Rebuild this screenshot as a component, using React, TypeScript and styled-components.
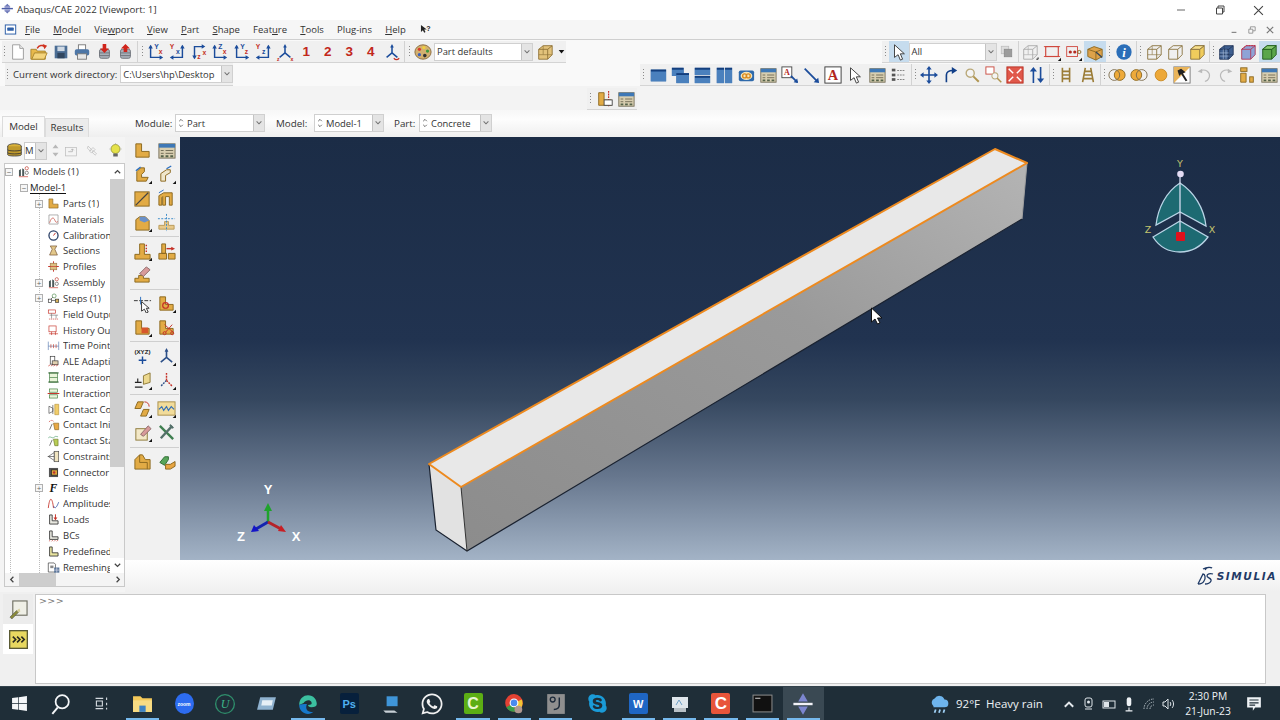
import type { ReactNode } from "react";
import styled, { createGlobalStyle } from "styled-components";
import { FaSkype, FaWhatsapp, FaWindows } from "react-icons/fa";

const GlobalStyle = createGlobalStyle`
  html, body { margin: 0; padding: 0; background: #f0f0f0; }
  body { font-family: "Open Sans", "Noto Sans", sans-serif; color: #222; }
  * { box-sizing: border-box; }
`;

const Page = styled.div`
  width: 1280px;
  height: 720px;
  overflow: hidden;
  display: flex;
  flex-direction: column;
`;

/* ---------- title + menu ---------- */
const TitleBar = styled.div`
  height: 20px;
  background: #fff;
  display: flex;
  align-items: center;
  padding-left: 1px;
  font-size: 9.7px;
  color: #333;
  gap: 2px;
`;
const TitleText = styled.span`
  flex: 1;
  padding-bottom: 1px;
`;
const WinButton = styled.div`
  width: 39px;
  height: 20px;
  display: flex;
  align-items: center;
  justify-content: center;
`;
const WinButtons = styled.div`
  display: flex;
  padding-right: 2px;
`;
const MenuBar = styled.div`
  height: 20px;
  background: #f6f6f6;
  border-bottom: 1px solid #cfcfcf;
  display: flex;
  align-items: center;
  padding-left: 4px;
`;
const MenuList = styled.div`
  display: flex;
  flex: 1;
  align-items: center;
  gap: 13.2px;
  font-size: 9.5px;
  color: #333;
  margin-left: 8px;
`;
const ChildButtons = styled.div`
  display: flex;
  margin-right: 1px;
`;
const ChildButton = styled.div`
  width: 18px;
  height: 18px;
  display: flex;
  align-items: center;
  justify-content: center;
`;

/* ---------- toolbars ---------- */
const ToolRow = styled.div<{ $h: number; $bg?: string }>`
  height: ${p => p.$h}px;
  background: ${p => p.$bg || "#f9f9f9"};
  display: flex;
  justify-content: space-between;
  align-items: flex-end;
`;
const ToolGroup = styled.div<{ $ml?: number }>`
  display: flex;
  align-items: center;
  height: 22px;
  background: #f0f0f0;
  border-bottom: 1px solid #d4d4d4;
  margin-left: ${p => p.$ml || 0}px;
`;
const Grip = styled.div<{ $w?: number }>`
  width: ${p => p.$w || 7}px;
  height: 13px;
  flex: none;
  background: radial-gradient(circle, #8a8a8a 0.7px, transparent 0.9px) center top / 3px 3px repeat-y;
`;
const Sep = styled.div`
  width: 1px;
  height: 21px;
  margin: 0 1px;
  background: #d2d2d2;
  flex: none;
`;
const Slot = styled.div<{ $w?: number; $on?: boolean }>`
  width: ${p => p.$w || 21.5}px;
  height: 21px;
  flex: none;
  display: flex;
  align-items: center;
  justify-content: center;
  background: ${p => (p.$on ? "#c6dcee" : "transparent")};
`;
const Num = styled.span`
  color: #c2271b;
  font: bold 13.5px "Liberation Sans", sans-serif;
`;
const Combo = styled.div<{ $w: number }>`
  width: ${p => p.$w}px;
  height: 18px;
  flex: none;
  background: #fff;
  border: 1px solid #d0d0d0;
  display: flex;
  align-items: center;
  font-size: 9.4px;
  color: #333;
  padding-left: 2px;
`;
const ComboText = styled.span`
  flex: 1;
  white-space: nowrap;
`;
const ComboArrow = styled.div`
  width: 11px;
  align-self: stretch;
  flex: none;
  background: #e4e4e4;
  border-left: 1px solid #c4c4c4;
  display: flex;
  align-items: center;
  justify-content: center;
`;
const Spin = styled.div`
  width: 7px;
  flex: none;
  margin-right: 2px;
`;
const WorkDir = styled.div`
  display: flex;
  align-items: center;
  height: 23px;
  margin-left: 5px;
  background: #f0f0f0;
  border-bottom: 1px solid #d4d4d4;
  font-size: 9.6px;
  color: #333;
  gap: 3px;
`;
const ContextBar = styled.div`
  height: 27px;
  background: linear-gradient(#f7f7f7, #fdfdfd 35%, #efefef);
  display: flex;
  align-items: flex-start;
`;
const Tabs = styled.div`
  width: 135px;
  flex: none;
  display: flex;
  padding-left: 2px;
  align-items: flex-end;
  height: 27px;
`;
const Tab = styled.div<{ $on?: boolean }>`
  width: ${p => (p.$on ? 43 : 44)}px;
  height: ${p => (p.$on ? 21 : 19)}px;
  padding-bottom: ${p => (p.$on ? 2 : 1)}px;
  background: ${p => (p.$on ? "#fafafa" : "#ececec")};
  border: 1px solid #dcdcdc;
  border-bottom: none;
  font-size: 9.8px;
  display: flex;
  align-items: center;
  justify-content: center;
  color: #333;
`;
const ModuleBar = styled.div`
  display: flex;
  align-items: center;
  height: 18px;
  margin-top: 4px;
  font-size: 9.8px;
  color: #333;
`;
const ModuleLabel = styled.span<{ $w: number }>`
  width: ${p => p.$w}px;
  flex: none;
`;

/* ---------- main ---------- */
const Main = styled.div`
  height: 455px;
  display: flex;
`;
const Sidebar = styled.div`
  width: 125px;
  flex: none;
  background: #f4f4f4;
  padding: 1px 0 5px 4px;
  display: flex;
  flex-direction: column;
`;
const TreeTools = styled.div`
  height: 25px;
  display: flex;
  align-items: center;
  padding-left: 1px;
`;
const TreeCombo = styled.div`
  width: 23px;
  height: 18px;
  flex: none;
  display: flex;
  align-items: center;
  background: #fff;
  border: 1px solid #ccc;
  font-size: 9.5px;
  color: #333;
`;
const TreeFrame = styled.div`
  flex: 1;
  min-height: 0;
  background: #fff;
  border: 1px solid #c9c9c9;
  display: flex;
  flex-direction: column;
`;
const TreeBody = styled.div`
  flex: 1;
  min-height: 0;
  display: flex;
`;
const TreeList = styled.div`
  flex: 1;
  min-width: 0;
  overflow: hidden;
  background:
    repeating-linear-gradient(#bbb 0 1px, transparent 1px 2px) 5px 20px / 1px 100% no-repeat,
    repeating-linear-gradient(#bbb 0 1px, transparent 1px 2px) 34px 30px / 1px 100% no-repeat,
    #fff;
`;
const TreeRow = styled.div<{ $depth: number }>`
  height: 15.82px;
  display: flex;
  align-items: center;
  font-size: 9.5px;
  color: #333;
  white-space: nowrap;
  padding-left: ${p => [0, 15, 30][p.$depth]}px;
`;
const Expander = styled.div<{ $hidden?: boolean }>`
  width: 8px;
  height: 8px;
  flex: none;
  margin-right: 2px;
  border: 1px solid ${p => (p.$hidden ? "transparent" : "#b0b0b0")};
  background: ${p => (p.$hidden ? "transparent" : "#f6f6f6")};
  color: #666;
  font-size: 8px;
  line-height: 6px;
  text-align: center;
`;
const TreeIcon = styled.div`
  width: 16px;
  height: 14px;
  flex: none;
  display: flex;
  align-items: center;
  justify-content: center;
  margin-right: 2px;
`;
const Clipped = styled.span`
  overflow: hidden;
`;
const ActiveModel = styled.span`
  color: #222;
  border-bottom: 1px solid #111;
  line-height: 11px;
`;
const VScroll = styled.div`
  width: 14px;
  flex: none;
  background: #f4f4f4;
  display: flex;
  flex-direction: column;
  align-items: center;
`;
const ScrollBtn = styled.div`
  height: 15px;
  flex: none;
  width: 100%;
  display: flex;
  align-items: center;
  justify-content: center;
  background: #fff;
`;
const VThumb = styled.div`
  width: 100%;
  height: 288px;
  flex: none;
  background: #cdcdcd;
`;
const Filler = styled.div`
  flex: 1;
`;
const HScroll = styled.div`
  height: 13px;
  flex: none;
  background: #f4f4f4;
  display: flex;
  align-items: center;
`;
const HBtn = styled.div`
  width: 14px;
  height: 13px;
  flex: none;
  display: flex;
  align-items: center;
  justify-content: center;
`;
const HThumb = styled.div`
  width: 37px;
  height: 13px;
  background: #cdcdcd;
`;
const Workspace = styled.div`
  flex: 1;
  min-width: 0;
  display: flex;
  flex-direction: column;
`;
const WorkRow = styled.div`
  height: 423px;
  display: flex;
`;
const Toolbox = styled.div`
  width: 55px;
  flex: none;
  padding: 2px 0 0 5px;
  background: #f1f1f1;
`;
const ToolboxRow = styled.div`
  display: flex;
  height: 23.8px;
  align-items: center;
`;
const ToolboxSep = styled.div`
  height: 1px;
  width: 49px;
  margin: 2px 0;
  background: #cfcfcf;
`;
const Viewport = styled.div`
  flex: 1;
  position: relative;
  background: linear-gradient(#1b2c46 0%, #213350 48%, #35475f 62%, #66768d 80%, #a3b3c6 100%);
`;
const Scene = styled.svg`
  display: block;
  width: 100%;
  height: 100%;
`;
const Strip = styled.div`
  flex: 1;
  background: linear-gradient(#fff, #f0f0f0);
  display: flex;
  justify-content: flex-end;
  align-items: center;
  padding-right: 3px;
  gap: 2px;
`;
const Brand = styled.span`
  font: bold 10.5px "DejaVu Sans", sans-serif;
  letter-spacing: 1.6px;
  color: #1f3a66;
  font-style: italic;
`;
const CommandRow = styled.div`
  height: 94px;
  display: flex;
  background: #f0f0f0;
`;
const CommandSide = styled.div`
  width: 35px;
  flex: none;
  display: flex;
  flex-direction: column;
  align-items: center;
  padding: 2px 2px 0 3px;
`;
const CommandBtn = styled.div<{ $on?: boolean }>`
  width: 100%;
  height: 30px;
  flex: none;
  display: flex;
  align-items: center;
  justify-content: center;
  background: ${p => (p.$on ? "#fff" : "#ececec")};
`;
const Console = styled.div`
  width: 1231px;
  height: 90px;
  margin-top: 2px;
  background: #fff;
  border: 1px solid #c8c8c8;
  color: #777;
  font: 9.5px "DejaVu Sans", sans-serif;
  padding: 0 3px;
  letter-spacing: 0.4px;
`;

/* ---------- taskbar ---------- */
const Taskbar = styled.div`
  height: 34px;
  background: #1f2e38;
  display: flex;
  align-items: center;
  border-top: 1px solid #33424c;
`;
const TaskItem = styled.div<{ $w?: number; $open?: boolean; $active?: boolean }>`
  width: ${p => p.$w || 41.3}px;
  height: 33px;
  flex: none;
  position: relative;
  display: flex;
  align-items: center;
  justify-content: center;
  background: ${p => (p.$active ? "#3a4953" : "transparent")};
  &::after {
    content: "";
    display: ${p => (p.$open || p.$active ? "block" : "none")};
    position: absolute;
    left: 4px;
    right: 4px;
    bottom: 0;
    height: 2px;
    background: #76b9ed;
  }
`;
const TaskApps = styled.div`
  display: flex;
  flex: none;
  width: 928px;
`;
const Weather = styled.div`
  display: flex;
  align-items: center;
  color: #eef2f5;
  font-size: 11.5px;
  gap: 6px;
  width: 131px;
  flex: none;
`;
const TrayIcons = styled.div`
  display: flex;
  width: 120px;
  flex: none;
`;
const TrayIcon = styled.div`
  width: 20px;
  display: flex;
  justify-content: center;
  align-items: center;
  color: #dfe5ea;
`;
const Clock = styled.div`
  width: 58px;
  flex: none;
  color: #eef2f5;
  font-size: 10.3px;
  line-height: 14.5px;
  text-align: center;
  white-space: nowrap;
`;
const Notify = styled.div`
  flex: 1;
  display: flex;
  justify-content: center;
  padding-right: 10px;
`;
const Tile = styled.div<{ $bg: string; $fg?: string; $round?: boolean; $size?: number }>`
  width: 19px;
  height: 21px;
  border-radius: ${p => (p.$round ? "50%" : "2px")};
  background: ${p => p.$bg};
  color: ${p => p.$fg || "#fff"};
  font: bold ${p => p.$size || 11}px "Liberation Sans", sans-serif;
  display: flex;
  align-items: center;
  justify-content: center;
`;

/* ---------- icon drawings ---------- */
const Svg = styled.svg<{ $s: number }>`
  width: ${p => p.$s}px;
  height: ${p => p.$s}px;
  display: block;
  flex: none;
`;
const tan = "#e2ab45";
const tanS = "#8b6820";
const navy = "#1b4c9b";
const red = "#c53127";

const Fly = () => <path d="M20 20h-3.5l3.5-3.5z" fill="#111" />;
const LShape = () => <path d="M3 3h6v8h8v6H3z" fill={tan} stroke={tanS} />;
const Extr = () => <path d="M4 17V7l4-4h4v4l-3 3v3h7l-2 4z" fill={tan} stroke={tanS} />;
const Stack = ({ up }: { up?: boolean }) => (
  <>
    <rect x="5" y="7" width="11" height="10" rx="2" fill="#a9b0b8" stroke="#6c7177" />
    <path d="M5 11h11M5 14h11" stroke="#6c7177" />
    <path d={up ? "M10.5 1l5 5h-3v4h-4V6h-3z" : "M8.500 1h4v5h3l-5 5-5-5h3z"} fill="#d0241b" />
  </>
);
const FormWin = () => (
  <>
    <rect x="2" y="3" width="17" height="15" fill="#d8ceb0" stroke="#77705a" />
    <rect x="2" y="3" width="17" height="4" fill="#3e78b6" />
    <path d="M4 10h3M9 10h8M4 13h3M9 13h8" stroke="#6f6a55" />
    <path d="M4 16h3M9 16h3M14 16h3" stroke="#55634a" strokeWidth="2" />
  </>
);
const Axes = ({ kind, a, b }: { kind: "bl" | "br" | "tl"; a: string; b: string }) => {
  const lines = { bl: "M4 3v13h12", br: "M16 3v13H4", tl: "M15 4H5v13" }[kind];
  return (
    <>
      <path d={lines} fill="none" stroke={navy} strokeWidth="1.6" />
      {kind === "bl" && <path d="M1.500 6L4 2l2.500 4zM14 13.500l4 2.500-4 2.500z" fill={navy} />}
      {kind === "br" && <path d="M13.500 6L16 2l2.500 4zM6 13.500L2 16l4 2.500z" fill={navy} />}
      {kind === "tl" && <path d="M13 1.500L17 4l-4 2.500zM2.500 14L5 18l2.500-4z" fill={navy} />}
      <text x={kind === "br" ? 2 : kind === "tl" ? 14 : 8} y={kind === "tl" ? 13 : 7} fontSize="7.500" fontWeight="700" fill={kind === "bl" ? navy : red} fontFamily="Liberation Sans">{kind === "bl" ? a : b}</text>
      <text x={kind === "br" ? 9 : kind === "tl" ? 8 : 13} y={kind === "tl" ? 18 : 12} fontSize="7.500" fontWeight="700" fill={kind === "br" ? navy : red} fontFamily="Liberation Sans">{kind === "bl" ? b : a}</text>
    </>
  );
};
const Triad = ({ c = navy }: { c?: string }) => (
  <>
    <path d="M10 3v8L4 16M10 11l6 5" fill="none" stroke={c} strokeWidth="1.700" />
    <path d="M8 5l2-4 2 4z" fill={c} />
  </>
);
const Cube = ({ fill, stroke, top, wire }: { fill: string; stroke: string; top?: string; wire?: boolean }) => (
  <>
    <path d="M3 7l5-4h10v10l-5 5H3z" fill={fill} stroke={stroke} />
    <path d="M3 7h10v11M13 7l5-4" fill="none" stroke={stroke} />
    {top && <path d="M3 7l5-4h10l-5 4z" fill={top} stroke={stroke} />}
    {wire && <path d="M8 3v10H3M8 13h10" fill="none" stroke={stroke} strokeWidth=".7" />}
  </>
);
const Pane = ({ x, y, w, h }: { x: number; y: number; w: number; h: number }) => (
  <>
    <rect x={x} y={y} width={w} height={h} fill="#2a62a8" />
    <rect x={x} y={y + 2} width={w} height={h - 2} fill="#4a80bd" />
    <rect x={x} y={y} width={w} height="2" fill="#143f7d" />
  </>
);
const Overlap = ({ flip }: { flip?: boolean }) => (
  <>
    <circle cx={flip ? 7 : 13} cy="10" r="6" fill="#eeaa3a" stroke="#8b6820" />
    <circle cx={flip ? 13 : 7} cy="10" r="6" fill="none" stroke="#7a6a4a" />
  </>
);
const Ladder = ({ wide }: { wide?: boolean }) => (
  <path d={wide ? "M7 2L4 18M13 2l3 16M6 6h8M5.500 10h9M5 14h10" : "M6 2v16M14 2v16M6 6h8M6 10h8M6 14h8"} fill="none" stroke="#9b7c36" strokeWidth="1.800" />
);
const Arrow = ({ d, c = navy }: { d: string; c?: string }) => <path d={d} fill="none" stroke={c} strokeWidth="1.800" />;
const Cursor = () => <path d="M5 2v14l4-3 2.500 6 2.500-1-2.500-6H16z" fill="#fff" stroke="#333" />;
const Mag = () => (
  <>
    <circle cx="8" cy="8" r="4.500" fill="#f4f4f4" stroke="#b9a878" strokeWidth="1.500" />
    <path d="M11.500 11.500l6 6" stroke="#b09550" strokeWidth="2.200" />
  </>
);

const glyphs: Record<string, ReactNode> = {
  app: <><path d="M9 1l3.500 3.500h-7zM9 15l-3.500-3.500h7z" fill="#6673b5" /><path d="M1 8h16" stroke="#4d5ea8" strokeWidth="2" /><rect x="5" y="4" width="8" height="3" fill="#8d94c9" /><rect x="5" y="9" width="8" height="3" fill="#8d94c9" /></>,
  doc: <><rect x="2" y="3" width="16" height="14" fill="#fff" stroke="#2d5fa8" strokeWidth="1.500" /><rect x="5" y="7" width="10" height="5" rx="1" fill="#2d5fa8" /></>,
  helpArrow: <><path d="M3 3v11l3-3 2 4 2-1-2-4h4z" fill="#222" /><text x="11" y="12" fontSize="11" fontWeight="700" fontFamily="Liberation Sans" fill="#222">?</text></>,
  new: <><path d="M4 2h8l4 4v12H4z" fill="#fff" stroke="#999" /><path d="M12 2v4h4" fill="#eee" stroke="#999" /></>,
  open: <><path d="M1 7h6l1 2h9v9H1z" fill="#e8b94c" stroke="#a7832c" /><path d="M2 18l3-7h14l-3 7z" fill="#f4d47c" stroke="#a7832c" /><path d="M8 6c2-4 6-4 8-2" fill="none" stroke="#d0321f" strokeWidth="1.600" /><path d="M14 1l5 2-3 4z" fill="#d0321f" /></>,
  save: <><rect x="3" y="3" width="14" height="14" fill="#4b6d94" /><rect x="6" y="4" width="8" height="5" fill="#cfd9e4" /><rect x="6" y="11" width="8" height="6" fill="#31465f" /></>,
  print: <><rect x="6" y="2" width="8" height="6" fill="#fff" stroke="#777" /><rect x="2" y="7" width="16" height="7" rx="2" fill="#4d76a6" /><rect x="5" y="12" width="10" height="6" fill="#e8e8e8" stroke="#777" /></>,
  dbDown: <Stack />,
  dbUp: <Stack up />,
  a1: <Axes kind="bl" a="Y" b="x" />,
  a2: <Axes kind="br" a="x" b="Y" />,
  a3: <Axes kind="tl" a="z" b="x" />,
  a4: <Axes kind="bl" a="Z" b="x" />,
  a5: <Axes kind="bl" a="Y" b="z" />,
  a6: <Axes kind="br" a="z" b="Y" />,
  iso: <><Triad /><text x="1" y="20" fontSize="5.500" fontWeight="700" fill={red}>z</text><text x="16" y="20" fontSize="5.500" fontWeight="700" fill={red}>x</text></>,
  triad2: <><Triad /><path d="M12 17c2 2 4 2 6 0" fill="none" stroke={red} strokeWidth="1.400" /></>,
  palette: <><ellipse cx="10" cy="10" rx="9" ry="8" fill="#d3b070" stroke="#87683a" /><circle cx="6" cy="7" r="1.800" fill="#d83a2b" /><circle cx="11" cy="5" r="1.800" fill="#f0d03a" /><circle cx="15" cy="9" r="1.800" fill="#3b9a3c" /><circle cx="12" cy="14" r="2" fill="#333" /><circle cx="6" cy="13" r="1.800" fill="#3a62c0" /></>,
  yCubeW: <Cube fill="#e2c27b" stroke="#8e7236" wire />,
  cursor: <Cursor />,
  stackGray: <><rect x="3" y="3" width="10" height="10" fill="#ddd" stroke="#bbb" /><rect x="7" y="7" width="10" height="10" fill="#9c9c9c" stroke="#888" /></>,
  wireGray: <><Cube fill="none" stroke="#aaa" wire /><path d="M17 18h2v-2" stroke="#111" fill="none" /></>,
  redBox: <><rect x="3" y="4" width="14" height="11" fill="none" stroke="#d0473d" strokeWidth="1.300" /><path d="M1 4h4M15 4h4M1 15h3M15 15h4" stroke="#d0473d" /><Fly /></>,
  redNodes: <><rect x="3" y="4" width="12" height="11" fill="none" stroke="#d0473d" /><circle cx="7" cy="10" r="1.800" fill="#b52b22" /><circle cx="12" cy="10" r="1.800" fill="#b52b22" /><circle cx="17" cy="10" r="1.800" fill="none" stroke="#8b6820" /><Fly /></>,
  orangeBox: <><path d="M2 7l7-3 9 3v8l-7 4-9-4z" fill="#dda24a" stroke="#8b6820" /><path d="M2 7l9 3 7-3M11 10v9" fill="none" stroke="#8b6820" /><path d="M11 10l7 6" stroke="#345" strokeWidth="1.500" /></>,
  info: <><circle cx="10" cy="10" r="8.500" fill="#2b6eb8" /><text x="10" y="15.500" fontSize="14" fontWeight="700" fontStyle="italic" fontFamily="Liberation Serif" fill="#fff" textAnchor="middle">i</text></>,
  cubeW: <Cube fill="none" stroke="#8a7440" wire />,
  cubeH: <Cube fill="none" stroke="#8a7440" />,
  cubeY: <Cube fill="#f0cc5c" stroke="#8a7440" top="#f8e08c" />,
  cubeMesh: <><Cube fill="#3e5f90" stroke="#22375a" wire /><path d="M7 7v11M10 7v11M3 11h10M3 14.500h10" stroke="#a8bcd8" strokeWidth=".7" /></>,
  cubeRed: <><Cube fill="#8ea3d6" stroke="#b03a5a" /><path d="M3 7l5-4h10" fill="none" stroke="#c0263c" strokeDasharray="2 1" /></>,
  cubeGreen: <Cube fill="#5aa64a" stroke="#205c1e" top="#8acb70" />,
  v1: <Pane x={2} y={4} w={17} h={13} />,
  v2: <><Pane x={1} y={2} w={13} h={9} /><Pane x={6} y={8} w={14} h={11} /></>,
  v3: <><Pane x={2} y={2} w={17} h={8} /><Pane x={2} y={11} w={17} h={8} /></>,
  v4: <><Pane x={2} y={2} w={8} h={17} /><Pane x={11} y={2} w={8} h={17} /></>,
  v5: <><rect x="2" y="5" width="17" height="12" rx="2" fill="#2f6aab" /><ellipse cx="10.500" cy="11" rx="6.500" ry="4.500" fill="#f5e5b8" /><circle cx="8.500" cy="11" r="2.200" fill="none" stroke="#d98a1e" strokeWidth="1.500" /><circle cx="12.500" cy="11" r="2.200" fill="none" stroke="#d98a1e" strokeWidth="1.500" /></>,
  form: <FormWin />,
  annotA: <><rect x="1" y="1" width="11" height="12" fill="#fff" stroke="#444" /><text x="6.500" y="10.500" fontSize="9" fontWeight="700" fontFamily="Liberation Serif" fill="#b3261e" textAnchor="middle">A</text><path d="M11 11l7 7" stroke={navy} strokeWidth="2" /><path d="M19 19l-5-1 4-4z" fill={navy} /></>,
  annotArrow: <><path d="M3 3l14 14" stroke={navy} strokeWidth="2" /><path d="M19 19l-6-1 5-5z" fill={navy} /></>,
  annotBox: <><rect x="1" y="1" width="18" height="18" fill="#fff" stroke="#333" /><text x="10" y="16" fontSize="16" fontWeight="700" fontFamily="Liberation Serif" fill="#b3261e" textAnchor="middle">A</text></>,
  list: <><path d="M8 5h9M8 10h9M8 15h9" stroke="#777" strokeDasharray="2 1" /><rect x="2" y="3" width="4" height="3" fill="#555" /><rect x="2" y="8.500" width="4" height="3" fill="#555" /><rect x="2" y="13.500" width="4" height="3" fill="#555" /></>,
  move: <><Arrow d="M10 3v14M3 10h14" /><path d="M10 0l3 4H7zM10 20l3-4H7zM0 10l4-3v6zM20 10l-4-3v6z" fill={navy} /></>,
  rotate: <><Arrow d="M6 18V10c0-3 3-5 7-5" c="#123f88" /><path d="M12 1l6 4-6 4z" fill="#123f88" /></>,
  mag: <Mag />,
  boxZoom: <><rect x="1" y="1" width="9" height="8" fill="#fff" stroke="#c8453a" /><g transform="translate(5 5) scale(.75)"><Mag /></g></>,
  fit: <><rect x="1" y="1" width="18" height="18" fill="#e0584a" stroke="#b73024" /><path d="M3 3l5 5M17 3l-5 5M3 17l5-5M17 17l-5-5" stroke="#fff" strokeWidth="1.600" /></>,
  updown: <><Arrow d="M6 4v15M14 1v15" /><path d="M2 6l4-5 4 5zM10 14l4 5 4-5z" fill={navy} /></>,
  ladder: <Ladder />,
  ladderW: <Ladder wide />,
  o1: <Overlap />,
  o2: <Overlap flip />,
  sphere: <circle cx="10" cy="10" r="6.500" fill="#eda838" stroke="#c98a24" />,
  pick: <><rect x="1" y="1" width="18" height="18" fill="#fff" stroke="#777" /><path d="M1 19V1h18z" fill="#e9b45a" /><path d="M5 5l4-2 5 4-3 1 5 8-2 1-5-8-2 2z" fill="#222" /></>,
  undo: <><path d="M6 5c6-2 11 2 10 7-1 3-3 5-5 5" fill="none" stroke="#b9b9b9" strokeWidth="1.300" /><path d="M3 6l5-3v5z" fill="#b9b9b9" /></>,
  redo: <><path d="M14 5c-6-2-11 2-10 7 1 3 3 5 5 5" fill="none" stroke="#b9b9b9" strokeWidth="1.300" /><path d="M17 6l-5-3v5z" fill="#b9b9b9" /></>,
  tree2: <><rect x="3" y="2" width="7" height="4" fill={tan} stroke={tanS} /><path d="M3 8h6v10H3z" fill={tan} stroke={tanS} /><rect x="13" y="12" width="4" height="6" fill={tan} stroke={tanS} /></>,
  lDatum: <><LShape /><path d="M14 1v18" stroke={red} strokeDasharray="2 1" strokeWidth="1.300" /><rect x="9" y="11" width="9" height="6" fill="#fff" stroke="#444" /></>,
  lPart: <LShape />,
  extrude: <><Extr /><path d="M3 6l5-4" stroke="#2a6ec0" strokeWidth="1.400" /><Fly /></>,
  cutHollow: <><path d="M4 17V9l6-4h4v3l-5 3v6z" fill="#efe6cc" stroke={tanS} /><path d="M10 4l5-3" stroke="#2a6ec0" strokeWidth="1.400" /><Fly /></>,
  partition: <><rect x="2" y="3" width="15" height="15" fill={tan} stroke={tanS} /><path d="M3 17L16 4" stroke="#444" strokeWidth="1.300" /></>,
  shell: <><path d="M2 17V7l5-3h9v13h-3V8H9v9H6V8L5 9v8z" fill={tan} stroke={tanS} /><path d="M2 4l5-3" stroke="#2a6ec0" /></>,
  blendBlue: <><path d="M3 7l4-3h6l4 4v10H3z" fill={tan} stroke={tanS} /><path d="M7 4h6l4 4-5 2-5-2z" fill="#6a90c8" /><Fly /></>,
  axisDash: <><path d="M2 13h6v-4h4v4h6v4H2z" fill="#e8c98a" stroke="#b89a5a" /><path d="M10 1v18M1 6h18" stroke="#3a8ac8" strokeDasharray="2 1.500" /></>,
  tDots: <><path d="M7 2h5v11h6v5H2v-5h5z" fill={tan} stroke={tanS} /><path d="M14 3v8" stroke={red} strokeWidth="1.500" strokeDasharray="1.500 1.500" /><Fly /></>,
  tArrow: <><path d="M5 2h4v10h-4zM2 12h8v6H2zM12 12h7v6h-7z" fill={tan} stroke={tanS} /><path d="M10 7h7" stroke={red} strokeWidth="1.500" /><path d="M19 7l-4-2v4z" fill={red} /></>,
  erase: <><path d="M6 11h5v3h6v4H2v-4h4z" fill={tan} stroke={tanS} /><path d="M7 9l7-7 4 3-7 7z" fill="#d89a9a" stroke="#8d6a6a" /></>,
  crossCursor: <><path d="M1 7h18" stroke="#333" strokeDasharray="4 1.500" /><path d="M8 3v8" stroke="#2a6ec0" /><path d="M9 8v10l3-2 2 4 2-1-2-4h3z" fill="#fff" stroke="#333" /></>,
  lCircle: <><LShape /><circle cx="9" cy="12" r="3" fill="none" stroke={red} strokeWidth="1.300" /><Fly /></>,
  lRed: <><LShape /><rect x="9" y="10" width="7" height="6" fill="#d6562b" /><Fly /></>,
  lScissors: <><LShape /><path d="M8 7l9 8M16 7l-7 8" stroke={red} /><circle cx="8" cy="16" r="1.600" fill="none" stroke={red} /><circle cx="16" cy="16" r="1.600" fill="none" stroke={red} /></>,
  xyz: <><text x="10" y="7" fontSize="6.500" fontWeight="700" fontFamily="Liberation Sans" textAnchor="middle" fill="#222">(XYZ)</text><path d="M10 10v8M6 14h8" stroke={navy} strokeWidth="1.500" /></>,
  triadB: <><Triad c="#2c4f88" /><Fly /></>,
  csys: <><path d="M11 14V5l7-3v10z" fill="#ecd88e" stroke="#8e7a3a" /><path d="M2 12h7M5 12V8M2 17h8" stroke="#222" strokeWidth="1.200" /><Fly /></>,
  triadR: <><path d="M10 2v8" stroke={red} strokeWidth="1.500" strokeDasharray="2 1" /><path d="M10 10l-6 6" stroke="#2c4f88" strokeWidth="1.500" strokeDasharray="2 1" /><path d="M10 10l6 6" stroke={red} strokeWidth="1.500" strokeDasharray="2 1" /><Fly /></>,
  parallel: <><path d="M2 10l3-7h6l-3 7zM8 18l3-7h6l-3 7z" fill={tan} stroke={tanS} /><path d="M12 3c3 0 5 2 5 5" fill="none" stroke={red} /><Fly /></>,
  waveBox: <><rect x="1" y="3" width="18" height="14" fill="#f2dc9a" stroke="#a88f4a" /><path d="M2 11l3-3 2 4 3-4 2 4 3-4 3 3" fill="none" stroke="#3370b8" strokeWidth="1.200" /><Fly /></>,
  pencilBox: <><rect x="3" y="6" width="12" height="12" fill="#f3e8c7" stroke="#8e7a3a" /><path d="M8 12l8-9 3 3-8 8z" fill="#d89a9a" stroke="#8d6a6a" /><Fly /></>,
  tools: <><path d="M3 3l14 14" stroke="#3f7f50" strokeWidth="2.500" /><path d="M16 3L4 16" stroke="#55706a" strokeWidth="2.500" /><path d="M14 1l4 4-2 1-3-3z" fill="#55706a" /></>,
  tanBox: <><path d="M2 18V8l5-5h3l3 5h5v10z" fill={tan} stroke={tanS} /><path d="M7 3v8h8v7" fill="none" stroke={tanS} /></>,
  greenArrows: <><path d="M3 11l5-6h4v3l-4 6z" fill="#58a55a" stroke="#2e6d34" /><path d="M9 13h5l5-3v5l-5 3H9z" fill="#e8a542" stroke="#8b6820" /></>,
  dbTan: <><ellipse cx="10" cy="5" rx="8" ry="3" fill="#d9b23a" stroke="#444" /><path d="M2 5v10c0 2 16 2 16 0V5" fill="#c09a2c" stroke="#444" /><path d="M2 9c0 2 16 2 16 0M2 12.500c0 2 16 2 16 0" fill="none" stroke="#333" /></>,
  updownGray: <path d="M10 2l4 5H6zM10 18l4-5H6z" fill="#b8b8b8" />,
  folderUp: <><rect x="2" y="5" width="16" height="12" fill="#f4f4f4" stroke="#bbb" /><path d="M6 11h6V7M10 9l2-2 2 2" fill="none" stroke="#aaa" /></>,
  links: <path d="M3 3l5 5-2 2-4-4zM10 9l5 5-2 2-4-4zM5 10l5-5 3 3-5 5z" fill="none" stroke="#bbb" />,
  bulb: <><circle cx="10" cy="8" r="6" fill="#e5e24a" stroke="#8e8e30" /><rect x="7" y="14" width="6" height="4" fill="#666" /><path d="M10 0v1M2 8h1M17 8h1" stroke="#999" /></>,
  models: <><path d="M3 17V8l3-2v11zM8 17V5l3 2v10z" fill="#4c5a5a" /><circle cx="15" cy="5" r="2.500" fill="none" stroke="#c0392b" /><circle cx="15" cy="12" r="2.500" fill="none" stroke="#555" /><path d="M3 18h14" stroke={red} /></>,
  material: <><path d="M3 3h14v14H3z" fill="#fff" stroke="#888" /><path d="M4 15c3-9 6-9 8-4s3 3 5 2" fill="none" stroke="#c0392b" /></>,
  calib: <><circle cx="10" cy="10" r="7" fill="#fff" stroke="#2a3f66" strokeWidth="2" /><path d="M10 10l3-4" stroke={red} strokeWidth="1.500" /></>,
  section: <path d="M5 3h10l-3 5 4 9H4l4-9z" fill="#e2c78a" stroke="#6d4a2a" />,
  profile: <><path d="M2 10h16M10 2v16" stroke={red} strokeWidth="1.400" /><rect x="5" y="5" width="10" height="10" fill="#dcbf80" stroke="#9b7a4a" /><path d="M2 10h16" stroke={red} /></>,
  steps: <><rect x="2" y="11" width="5" height="5" fill="none" stroke="#333" /><circle cx="11" cy="6" r="3" fill="none" stroke="#4a8a4a" /><rect x="13" y="11" width="5" height="5" fill="#d8b35c" stroke="#333" /><path d="M7 13h6M9 8l-3 3" stroke="#333" /></>,
  fieldOut: <><rect x="2" y="3" width="11" height="5" fill="#fff" stroke={red} /><path d="M4 11h13M7 8v8M14 11v5" stroke="#777" /><path d="M3 17h14" stroke={red} strokeDasharray="2 1" /></>,
  histOut: <><rect x="3" y="3" width="11" height="9" fill="#fff" stroke={red} /><path d="M3 15h14M7 12v5M13 12v5" stroke={red} /></>,
  timePt: <><path d="M2 4v13M18 4v13M2 11h16" stroke="#5a7ab0" /><path d="M6 8v6M10 8v6M14 8v6" stroke="#c0392b" /></>,
  ale: <><rect x="5" y="2" width="7" height="12" fill="#fff" stroke="#333" /><rect x="8" y="9" width="9" height="6" fill="#e0d0b0" stroke="#333" /><path d="M2 17l3-2M6 17l3-2M10 17l3-2M14 17l3-2" stroke={red} /></>,
  inter1: <><rect x="4" y="3" width="12" height="14" fill="#eaf4da" stroke="#3c7a3c" /><path d="M2 3h16M2 17h16" stroke="#2a5f2a" strokeWidth="1.500" /><path d="M4 10h12" stroke="#3c7a3c" /></>,
  inter2: <><rect x="4" y="3" width="12" height="5" fill="#eaf4da" stroke="#3c7a3c" /><rect x="4" y="12" width="12" height="5" fill="#eaf4da" stroke="#3c7a3c" /><path d="M1 10h18" stroke={red} strokeWidth="1.500" /></>,
  contactC: <><path d="M12 2h6v16h-6z" fill="#f1cd6a" stroke="#b8953a" /><path d="M3 5l6 3v5l-6 3z" fill="none" stroke="#444" /><path d="M9 3v14" stroke="#444" /></>,
  contactI: <><path d="M10 8h8v10h-6z" fill="#e8a844" stroke="#8b6820" /><path d="M3 6c3-3 5-3 7-1" fill="none" stroke={red} strokeDasharray="2 1" /><path d="M4 18l4-9" stroke="#333" /></>,
  contactS: <><path d="M10 8h7v10h-5z" fill="#b8cc54" stroke="#6a7a2c" /><path d="M2 6c3-4 6 2 9-1s4 0 6-1" fill="none" stroke="#4a9a6a" /><path d="M4 18l4-9" stroke="#333" /></>,
  constraint: <><rect x="11" y="2" width="7" height="16" fill="#f0e4c0" stroke="#444" /><path d="M2 10l9-6v12z" fill="#fff" stroke="#444" /><path d="M1 10h10" stroke="#444" /></>,
  connector: <><rect x="3" y="3" width="14" height="14" fill="#555" /><rect x="7" y="6" width="9" height="8" fill="#e0a83c" stroke="#222" /><circle cx="11" cy="10" r="2" fill="#b33" /></>,
  fields: <text x="10" y="16" fontSize="18" fontStyle="italic" fontWeight="700" fontFamily="Liberation Serif" textAnchor="middle" fill="#111">F</text>,
  amp: <><path d="M2 17c2-18 6-18 8 0" fill="none" stroke={red} strokeWidth="1.300" /><path d="M10 14c2 4 4 4 8-6" fill="none" stroke="#3a58a8" strokeWidth="1.300" /></>,
  loads: <><path d="M4 3h4v9h9v5H4z" fill="#e8e8e0" stroke="#333" strokeWidth="1.300" /><path d="M13 2v8" stroke={red} strokeWidth="1.500" /><path d="M10 7l3 4 3-4z" fill={red} /></>,
  bcs: <><path d="M4 3h4v9h9v4H4z" fill="#e8e8e0" stroke="#333" strokeWidth="1.300" /><path d="M3 19l2-2M7 19l2-2M11 19l2-2M15 19l2-2" stroke={red} /></>,
  predef: <path d="M4 3h4v9h9v5H4z" fill="#e9e4a0" stroke="#333" strokeWidth="1.300" />,
  remesh: <><path d="M2 3h9l2 2v12H2z" fill="#fff" stroke="#333" /><path d="M5 7h5v4H5z" fill="#888" /><rect x="11" y="10" width="8" height="8" fill="#5a7598" /><path d="M15 10v8M11 14h8" stroke="#dde" /></>,
  drawer: <><rect x="4" y="1" width="15" height="15" fill="#efefe6" stroke="#6f6f62" strokeWidth="1.200" /><path d="M1 18l7-7 2 2-7 7z" fill="#8a8a3a" stroke="#555" strokeWidth=".6" /><path d="M8 11l3-2 1 3-2 1z" fill="#d8d0a0" /></>,
  prompt: <><rect x=".7" y=".7" width="18.600" height="18.600" fill="#e8d860" stroke="#5a5a34" strokeWidth="1.400" /><path d="M4 7l3 3-3 3M8.500 7l3 3-3 3M13 7l3 3-3 3" fill="none" stroke="#2a2a20" strokeWidth="1.700" /></>,
};

const Glyph = ({ name, size = 18 }: { name: string; size?: number }) => (
  <Svg $s={size} viewBox="0 0 20 20">{glyphs[name]}</Svg>
);
const Chevron = ({ dir = "down", size = 8, color = "#777" }: { dir?: "down" | "up" | "left" | "right"; size?: number; color?: string }) => {
  const d = { down: "M2 3l3 3 3-3", up: "M2 7l3-3 3 3", left: "M6 2L3 5l3 3", right: "M4 2l3 3-3 3" }[dir];
  return (
    <Svg $s={size} viewBox="0 0 10 10">
      <path d={d} fill="none" stroke={color} strokeWidth="1.400" />
    </Svg>
  );
};
const Slots = ({ names, w }: { names: string[]; w?: number }) => (
  <>
    {names.map((n, i) => (
      <Slot key={i} $w={w}><Glyph name={n} /></Slot>
    ))}
  </>
);

/* ---------- data ---------- */
const menuItems: [string, string, string][] = [
  ["", "F", "ile"], ["", "M", "odel"], ["Vie", "w", "port"], ["", "V", "iew"], ["", "P", "art"],
  ["", "S", "hape"], ["Feat", "u", "re"], ["", "T", "ools"], ["Plu", "g", "-ins"], ["", "H", "elp"],
];
type Node = { label: string; icon: string; plus?: boolean };
const tree: Node[] = [
  { label: "Parts (1)", icon: "lPart", plus: true },
  { label: "Materials", icon: "material" },
  { label: "Calibrations", icon: "calib" },
  { label: "Sections", icon: "section" },
  { label: "Profiles", icon: "profile" },
  { label: "Assembly", icon: "models", plus: true },
  { label: "Steps (1)", icon: "steps", plus: true },
  { label: "Field Output Requests", icon: "fieldOut" },
  { label: "History Output Requests", icon: "histOut" },
  { label: "Time Points", icon: "timePt" },
  { label: "ALE Adaptive Mesh", icon: "ale" },
  { label: "Interactions", icon: "inter1" },
  { label: "Interaction Properties", icon: "inter2" },
  { label: "Contact Controls", icon: "contactC" },
  { label: "Contact Initializations", icon: "contactI" },
  { label: "Contact Stabilizations", icon: "contactS" },
  { label: "Constraints", icon: "constraint" },
  { label: "Connector Sections", icon: "connector" },
  { label: "Fields", icon: "fields", plus: true },
  { label: "Amplitudes", icon: "amp" },
  { label: "Loads", icon: "loads" },
  { label: "BCs", icon: "bcs" },
  { label: "Predefined Fields", icon: "predef" },
  { label: "Remeshing Rules", icon: "remesh" },
];
const toolbox: (string[] | "sep")[] = [
  ["lPart", "form"], ["extrude", "cutHollow"], ["partition", "shell"], ["blendBlue", "axisDash"], "sep",
  ["tDots", "tArrow"], ["erase"], "sep",
  ["crossCursor", "lCircle"], ["lRed", "lScissors"], "sep",
  ["xyz", "triadB"], ["csys", "triadR"], "sep",
  ["parallel", "waveBox"], ["pencilBox", "tools"], "sep",
  ["tanBox", "greenArrows"],
];

const TaskIcons: { open?: boolean; w?: number; node: ReactNode }[] = [
  { w: 39.5, node: <FaWindows size={17} color="#f4f6f8" /> },
  { node: <Svg $s={22} viewBox="0 0 20 20"><circle cx="12" cy="8" r="6" fill="none" stroke="#f4f6f8" strokeWidth="1.600" /><path d="M8 13l-5 6" stroke="#f4f6f8" strokeWidth="1.800" /></Svg> },
  { node: <Svg $s={17} viewBox="0 0 20 20"><path d="M3 4h9M3 16h9M4 7h7v6H4zM16 3v3M16 9v3M16 15v2" fill="none" stroke="#d6dce1" strokeWidth="1.300" /></Svg> },
  { open: true, node: <Svg $s={21} viewBox="0 0 20 20"><path d="M1 3h7l2 2h9v13H1z" fill="#f4c95a" /><rect x="1" y="7" width="18" height="11" fill="#f8dc84" /><rect x="7" y="12" width="6" height="6" fill="#3d82c4" /></Svg> },
  { node: <Tile $bg="#2d6cf0" $round $size={5}>zoom</Tile> },
  { node: <Svg $s={22} viewBox="0 0 20 20"><circle cx="10" cy="10" r="8.500" fill="none" stroke="#2f8f6c" strokeWidth="1.200" /><text x="10" y="14" fontSize="11" fontStyle="italic" fontFamily="Liberation Serif" fill="#3cb48a" textAnchor="middle">U</text></Svg> },
  { node: <Svg $s={21} viewBox="0 0 20 20"><path d="M4 4h15l-3 12H1z" fill="#8fb2cf" /><path d="M6 7h10l-1 5H5z" fill="#e6eff6" /></Svg> },
  { open: true, node: <Svg $s={22} viewBox="0 0 20 20"><path d="M2 11c0-6 4-9 8-9 5 0 8 4 8 8 0 2-2 3-5 3-2 0-3-1-3-2 3 0 4-1 3-3-1-2-5-2-7 1" fill="#3cc0a0" /><path d="M2 11c0 5 4 8 8 8 2 0 4-1 5-2-5 1-8-2-6-7-3 0-6 0-7 1z" fill="#1678cc" /></Svg> },
  { node: <Tile $bg="#07203c" $fg="#4fb0f0">Ps</Tile> },
  { node: <Svg $s={22} viewBox="0 0 20 20"><path d="M6 3h10v9H6z" fill="#3f95d8" /><path d="M11 12l-1 3M3 16h10l3 2H5z" fill="#c8d0d6" /></Svg> },
  { node: <FaWhatsapp size={24} color="#f0f0f0" /> },
  { open: true, node: <Tile $bg="#5cae14" $fg="#e8f5d0" $size={16}>C</Tile> },
  { open: true, node: <Svg $s={22} viewBox="0 0 20 20"><circle cx="10" cy="9" r="8" fill="#e34133" /><path d="M10 9L3 13a8 8 0 0 0 8 4z" fill="#3a9d4a" /><path d="M10 9l7-3a8 8 0 0 1-5 11z" fill="#f4c534" /><circle cx="10" cy="9" r="3.500" fill="#4a8af0" stroke="#fff" /><circle cx="14" cy="15" r="3.500" fill="#b09890" /></Svg> },
  { open: true, node: <Svg $s={22} viewBox="0 0 20 20"><rect x="2" y="1" width="16" height="18" fill="#8f8f8f" /><circle cx="7" cy="6" r="2.200" fill="none" stroke="#1c2a3a" strokeWidth="1.200" /><path d="M13 4v7c0 3-2 4-5 4" fill="none" stroke="#1c2a3a" strokeWidth="1.300" /></Svg> },
  { node: <FaSkype size={21} color="#1a9bd8" /> },
  { open: true, node: <Tile $bg="#1f66c4" $size={11}>W</Tile> },
  { open: true, node: <Svg $s={20} viewBox="0 0 20 20"><rect x="2" y="3" width="16" height="11" fill="#dfe6ec" /><path d="M6 11l3-5 3 5" stroke="#6ea0c8" fill="none" /><rect x="4" y="14" width="12" height="4" fill="#b8c0c6" /></Svg> },
  { open: true, node: <Tile $bg="#e8553a" $size={17}>C</Tile> },
  { open: true, node: <Svg $s={21} viewBox="0 0 20 20"><rect x="1" y="2" width="18" height="16" fill="#111" stroke="#888" /><path d="M3 5h5" stroke="#ccc" /></Svg> },
];

const ActiveAbaqus = () => (
  <Svg $s={24} viewBox="0 0 20 20">
    <path d="M10 1l4 7H6zM10 19l-4-7h8z" fill="#7c86cf" />
    <path d="M2 10h16" stroke="#f2f2f8" strokeWidth="2" />
  </Svg>
);

const Spinner = () => (
  <Spin>
    <Chevron dir="up" size={6} color="#555" />
    <Chevron size={6} color="#555" />
  </Spin>
);

export default function App() {
  return (
    <Page>
      <GlobalStyle />
      <TitleBar>
        <Glyph name="app" size={14} />
        <TitleText>Abaqus/CAE 2022 [Viewport: 1]</TitleText>
        <WinButtons>
          <WinButton>
            <Svg $s={10} viewBox="0 0 10 10"><path d="M1 5h8" stroke="#666" /></Svg>
          </WinButton>
          <WinButton>
            <Svg $s={10} viewBox="0 0 10 10"><path d="M1.500 3h6v6h-6zM3 3V1h6v6H7.500" fill="none" stroke="#444" /></Svg>
          </WinButton>
          <WinButton>
            <Svg $s={11} viewBox="0 0 10 10"><path d="M1 1l8 8M9 1l-8 8" stroke="#444" /></Svg>
          </WinButton>
        </WinButtons>
      </TitleBar>
      <MenuBar>
        <Glyph name="doc" size={13} />
        <MenuList>
          {menuItems.map(([a, b, c]) => (
            <span key={a + b + c}>{a}<u>{b}</u>{c}</span>
          ))}
          <Glyph name="helpArrow" size={13} />
        </MenuList>
        <ChildButtons>
          <ChildButton><Svg $s={8} viewBox="0 0 10 10"><path d="M2 8h6" stroke="#888" strokeWidth="1.500" /></Svg></ChildButton>
          <ChildButton><Svg $s={8} viewBox="0 0 10 10"><path d="M1 4h5v5H1zM3 4V1h6v5H6" fill="none" stroke="#888" /></Svg></ChildButton>
          <ChildButton><Svg $s={8} viewBox="0 0 10 10"><path d="M1 1l8 8M9 1l-8 8" stroke="#777" strokeWidth="1.500" /></Svg></ChildButton>
        </ChildButtons>
      </MenuBar>

      <ToolRow $h={23}>
        <ToolGroup $ml={2}>
          <Grip $w={5} />
          <Slots names={["new", "open", "save", "print", "dbDown", "dbUp"]} />
          <Sep />
          <Grip $w={6} />
          <Slots names={["a1", "a2", "a3", "a4", "a5", "a6", "iso"]} />
          {["1", "2", "3", "4"].map(n => (
            <Slot key={n}><Num>{n}</Num></Slot>
          ))}
          <Slot><Glyph name="triad2" /></Slot>
          <Sep />
          <Grip $w={6} />
          <Slot $w={22}><Glyph name="palette" /></Slot>
          <Combo $w={99}>
            <ComboText>Part defaults</ComboText>
            <ComboArrow><Chevron /></ComboArrow>
          </Combo>
          <Slot $w={24}><Glyph name="yCubeW" /></Slot>
          <Slot $w={9}><Svg $s={7} viewBox="0 0 10 10"><path d="M1 3h8L5 8z" fill="#111" /></Svg></Slot>
        </ToolGroup>
        <ToolGroup>
          <Grip />
          <Slot $w={20} $on><Glyph name="cursor" /></Slot>
          <Combo $w={88}>
            <ComboText>All</ComboText>
            <ComboArrow><Chevron /></ComboArrow>
          </Combo>
          <Slot $w={20}><Glyph name="stackGray" size={15} /></Slot>
          <Sep />
          <Slots names={["wireGray", "redBox", "redNodes"]} />
          <Slot $on><Glyph name="orangeBox" /></Slot>
          <Grip $w={8} />
          <Slot><Glyph name="info" /></Slot>
          <Sep />
          <Grip $w={5} />
          <Slots names={["cubeW", "cubeH", "cubeY"]} />
          <Sep />
          <Grip $w={5} />
          <Slots names={["cubeMesh", "cubeRed"]} />
          <Slot $on><Glyph name="cubeGreen" /></Slot>
        </ToolGroup>
      </ToolRow>

      <ToolRow $h={23}>
        <WorkDir>
          <Grip $w={5} />
          <span>Current work directory:</span>
          <Combo $w={113}>
            <ComboText>C:\Users\hp\Desktop</ComboText>
            <ComboArrow><Chevron /></ComboArrow>
          </Combo>
        </WorkDir>
        <ToolGroup>
          <Grip />
          <Slots w={21.9} names={["v1", "v2", "v3", "v4", "v5", "form", "annotA", "annotArrow", "annotBox", "cursor", "form", "list"]} />
          <Sep />
          <Grip $w={5} />
          <Slots w={21.6} names={["move", "rotate", "mag", "boxZoom", "fit", "updown"]} />
          <Sep />
          <Grip $w={5} />
          <Slots names={["ladder", "ladderW"]} />
          <Sep />
          <Grip $w={5} />
          <Slots w={21.7} names={["o1", "o2", "sphere", "pick", "undo", "redo", "tree2", "form"]} />
        </ToolGroup>
      </ToolRow>

      <ToolRow $h={24} $bg="#f3f3f3">
        <ToolGroup $ml={587}>
          <Grip />
          <Slots names={["lDatum", "form"]} />
        </ToolGroup>
      </ToolRow>

      <ContextBar>
        <Tabs>
          <Tab $on>Model</Tab>
          <Tab>Results</Tab>
        </Tabs>
        <ModuleBar>
          <ModuleLabel $w={40}>Module:</ModuleLabel>
          <Combo $w={90}>
            <Spinner />
            <ComboText>Part</ComboText>
            <ComboArrow><Chevron /></ComboArrow>
          </Combo>
          <ModuleLabel $w={11} />
          <ModuleLabel $w={38}>Model:</ModuleLabel>
          <Combo $w={70}>
            <Spinner />
            <ComboText>Model-1</ComboText>
            <ComboArrow><Chevron /></ComboArrow>
          </Combo>
          <ModuleLabel $w={10} />
          <ModuleLabel $w={25}>Part:</ModuleLabel>
          <Combo $w={73}>
            <Spinner />
            <ComboText>Concrete</ComboText>
            <ComboArrow><Chevron /></ComboArrow>
          </Combo>
        </ModuleBar>
      </ContextBar>

      <Main>
        <Sidebar>
          <TreeTools>
            <Slot $w={19}><Glyph name="dbTan" size={17} /></Slot>
            <TreeCombo>
              <ComboText>M</ComboText>
              <ComboArrow><Chevron /></ComboArrow>
            </TreeCombo>
            <Slot $w={16}><Glyph name="updownGray" size={15} /></Slot>
            <Slot $w={16}><Glyph name="folderUp" size={14} /></Slot>
            <Slot $w={28}><Glyph name="links" size={14} /></Slot>
            <Slot $w={16}><Glyph name="bulb" size={15} /></Slot>
          </TreeTools>
          <TreeFrame>
            <TreeBody>
              <TreeList>
                <TreeRow $depth={0}>
                  <Expander>−</Expander>
                  <TreeIcon><Glyph name="models" size={13} /></TreeIcon>
                  <Clipped>Models (1)</Clipped>
                </TreeRow>
                <TreeRow $depth={1}>
                  <Expander>−</Expander>
                  <ActiveModel>Model-1</ActiveModel>
                </TreeRow>
                {tree.map(n => (
                  <TreeRow key={n.label} $depth={2}>
                    <Expander $hidden={!n.plus}>{n.plus ? "+" : ""}</Expander>
                    <TreeIcon><Glyph name={n.icon} size={13} /></TreeIcon>
                    <Clipped>{n.label}</Clipped>
                  </TreeRow>
                ))}
              </TreeList>
              <VScroll>
                <ScrollBtn><Chevron dir="up" size={9} color="#444" /></ScrollBtn>
                <VThumb />
                <Filler />
                <ScrollBtn><Chevron size={9} color="#444" /></ScrollBtn>
              </VScroll>
            </TreeBody>
            <HScroll>
              <HBtn><Chevron dir="left" size={9} color="#444" /></HBtn>
              <HThumb />
              <Filler />
              <HBtn><Chevron dir="right" size={9} color="#444" /></HBtn>
            </HScroll>
          </TreeFrame>
        </Sidebar>

        <Workspace>
          <WorkRow>
            <Toolbox>
              {toolbox.map((row, i) =>
                row === "sep" ? (
                  <ToolboxSep key={i} />
                ) : (
                  <ToolboxRow key={i}>
                    {row.map(n => (
                      <Slot key={n} $w={24}><Glyph name={n} size={19} /></Slot>
                    ))}
                  </ToolboxRow>
                ),
              )}
            </Toolbox>
            <Viewport>
              <Scene viewBox="180 137 1100 423">
                <defs>
                  <linearGradient id="side" x1="0" y1="1" x2="1" y2="0">
                    <stop offset="0" stopColor="#8c8c8c" />
                    <stop offset="0.6" stopColor="#9a9a9a" />
                    <stop offset="1" stopColor="#b4b4b4" />
                  </linearGradient>
                </defs>
                <path d="M461 487L1027 163L1022 219L467 551Z" fill="url(#side)" />
                <path d="M429 464L461 487L467 551L436 530Z" fill="#e2e2e2" />
                <path d="M429 464L995 149L1027 163L461 487Z" fill="#e8e8e8" />
                <path d="M429 464L436 530L467 551L1022 219" fill="none" stroke="#1a2230" strokeWidth="1.200" />
                <path d="M461 487L467 551" stroke="#333" strokeWidth="1" />
                <path d="M1027 163L1022 219" stroke="#a0a0a0" strokeWidth="1" />
                <path d="M429 464L995 149L1027 163L461 487Z" fill="none" stroke="#ed8a1f" strokeWidth="2" strokeLinejoin="round" />

                {/* orientation triad */}
                <path d="M268 523V508" stroke="#1fa32c" strokeWidth="2.500" />
                <path d="M264 511l4-8 4 8z" fill="#1fa32c" />
                <path d="M268 522L256 529" stroke="#1424b0" strokeWidth="3" />
                <path d="M251 532l3-7 5 6z" fill="#1414c8" />
                <path d="M268 522L281 529" stroke="#b5232a" strokeWidth="3" />
                <path d="M286 532l-8-1 3-6z" fill="#c81e24" />
                <text x="268" y="494" fill="#fff" fontSize="13" fontWeight="700" fontFamily="Liberation Sans" textAnchor="middle">Y</text>
                <text x="241" y="541" fill="#fff" fontSize="13" fontWeight="700" fontFamily="Liberation Sans" textAnchor="middle">Z</text>
                <text x="296" y="541" fill="#fff" fontSize="13" fontWeight="700" fontFamily="Liberation Sans" textAnchor="middle">X</text>

                {/* view compass */}
                <path d="M1180 183C1166 192 1158 208 1156 225L1180 212L1206 226C1204 208 1194 192 1180 183Z" fill="#1d6a72" stroke="#b9d4e6" strokeWidth="1.300" />
                <path d="M1153 237L1180 221L1208 237C1200 248 1190 252 1180 252C1170 252 1160 248 1153 237Z" fill="#1d6a72" stroke="#b9d4e6" strokeWidth="1.300" />
                <path d="M1180 177V236" stroke="#d4dcf0" strokeWidth="1.300" />
                <circle cx="1180.500" cy="174" r="3.300" fill="#e4dcf4" />
                <rect x="1176" y="232" width="9" height="9" rx="1" fill="#e0101c" />
                <text x="1180" y="167" fill="#c4c46e" fontSize="9.500" fontFamily="DejaVu Sans" textAnchor="middle">Y</text>
                <text x="1148" y="233" fill="#c4c46e" fontSize="9.500" fontFamily="DejaVu Sans" textAnchor="middle">Z</text>
                <text x="1212" y="233" fill="#c4c46e" fontSize="9.500" fontFamily="DejaVu Sans" textAnchor="middle">X</text>

                {/* mouse pointer */}
                <path d="M871.500 308V322L875 319L877.500 324L880 323L877.500 318H882Z" fill="#fff" stroke="#111" />
              </Scene>
            </Viewport>
          </WorkRow>
          <Strip>
            <Svg $s={20} viewBox="0 0 20 20">
              <path d="M8 3c4-2 8-2 9-1-3-1-6 0-7 2M3 18L8 8c2 0 3 4 1 7-1 2-4 3-6 3" fill="none" stroke="#1f3a66" strokeWidth="1.300" />
              <path d="M18 8c-3-1-6 0-6 2s5 2 4 5c-1 2-4 3-6 3" fill="none" stroke="#1f3a66" strokeWidth="1.300" />
            </Svg>
            <Brand>SIMULIA</Brand>
          </Strip>
        </Workspace>
      </Main>

      <CommandRow>
        <CommandSide>
          <CommandBtn><Glyph name="drawer" size={19} /></CommandBtn>
          <CommandBtn $on><Glyph name="prompt" size={19} /></CommandBtn>
        </CommandSide>
        <Console>{">>>"}</Console>
      </CommandRow>

      <Taskbar>
        <TaskApps>
          {TaskIcons.map((t, i) => (
            <TaskItem key={i} $w={t.w} $open={t.open}>{t.node}</TaskItem>
          ))}
          <TaskItem $active><ActiveAbaqus /></TaskItem>
        </TaskApps>
        <Weather>
          <Svg $s={22} viewBox="0 0 20 20">
            <path d="M5 12a4 4 0 0 1 1-7 5 5 0 0 1 9 1 3.500 3.500 0 0 1 0 7H5z" fill="#6eb4ec" />
            <path d="M7 15l-1 3M11 15l-1 3M15 15l-1 3" stroke="#9fd0f5" strokeWidth="1.600" />
          </Svg>
          <span>92°F&nbsp; Heavy rain</span>
        </Weather>
        <TrayIcons>
          <TrayIcon><Chevron dir="up" size={14} color="#e4e9ed" /></TrayIcon>
          <TrayIcon><Svg $s={14} viewBox="0 0 14 14"><rect x="3" y="1" width="7" height="9" rx="2" fill="none" stroke="#dfe5ea" /><path d="M3 12h7" stroke="#dfe5ea" /><circle cx="6.500" cy="5" r="1.500" fill="#dfe5ea" /></Svg></TrayIcon>
          <TrayIcon><Svg $s={14} viewBox="0 0 14 14"><rect x="1" y="4" width="12" height="7" fill="none" stroke="#dfe5ea" /><rect x="2" y="5" width="5" height="5" fill="#dfe5ea" /></Svg></TrayIcon>
          <TrayIcon><Svg $s={16} viewBox="0 0 14 14"><rect x="5" y="1" width="4" height="8" rx="2" fill="#eef2f5" /><path d="M7 10v3M4 13h6" stroke="#eef2f5" /></Svg></TrayIcon>
          <TrayIcon><Svg $s={14} viewBox="0 0 14 14"><path d="M2 12a10 10 0 0 1 10-10M5 12a7 7 0 0 1 7-7M8 12a4 4 0 0 1 4-4" fill="none" stroke="#b9c3ca" strokeDasharray="1.500 1" /></Svg></TrayIcon>
          <TrayIcon><Svg $s={14} viewBox="0 0 14 14"><path d="M1 5h2l3-3v10L3 9H1z" fill="none" stroke="#dfe5ea" /><path d="M8 5c1 1 1 3 0 4M10 3c2 2 2 6 0 8" fill="none" stroke="#dfe5ea" /></Svg></TrayIcon>
        </TrayIcons>
        <Clock>
          <div>2:30 PM</div>
          <div>21-Jun-23</div>
        </Clock>
        <Notify>
          <Svg $s={16} viewBox="0 0 14 14">
            <path d="M1 1h12v9H8l-2 3v-3H1z" fill="#eef2f5" />
            <path d="M3 3.500h8M3 6h8M3 8h5" stroke="#1f2e38" />
          </Svg>
        </Notify>
      </Taskbar>
    </Page>
  );
}
